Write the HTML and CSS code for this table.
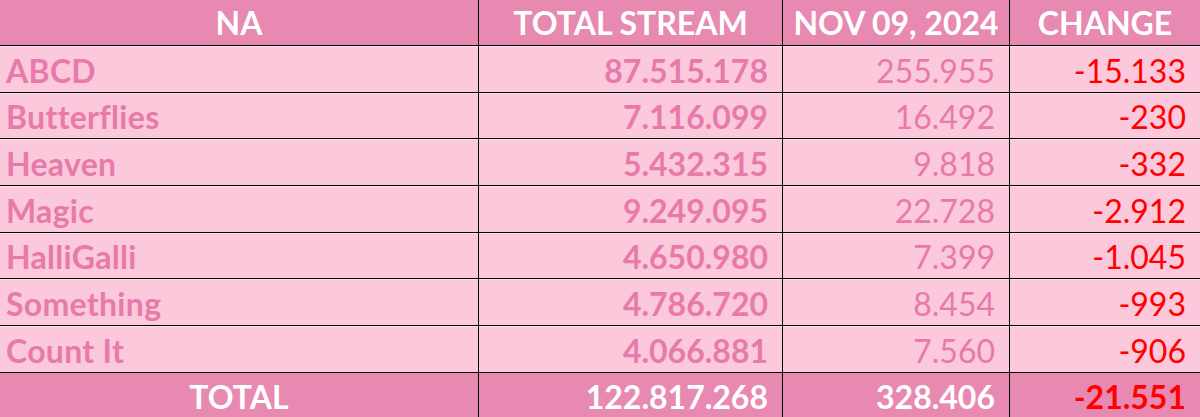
FILE: index.html
```html
<!DOCTYPE html>
<html>
<head>
<meta charset="utf-8">
<link rel="stylesheet" href="styles.css">
</head>
<body>
<div class="sheet">
  <div class="cell head c1 center">NA</div>
  <div class="cell head center">TOTAL STREAM</div>
  <div class="cell head center">NOV 09, 2024</div>
  <div class="cell head center">CHANGE</div>

  <div class="cell body c1 name">ABCD</div>
  <div class="cell body num bold">87.515.178</div>
  <div class="cell body num">255.955</div>
  <div class="cell body num red">-15.133</div>

  <div class="cell body c1 name">Butterflies</div>
  <div class="cell body num bold">7.116.099</div>
  <div class="cell body num">16.492</div>
  <div class="cell body num red">-230</div>

  <div class="cell body c1 name">Heaven</div>
  <div class="cell body num bold">5.432.315</div>
  <div class="cell body num">9.818</div>
  <div class="cell body num red">-332</div>

  <div class="cell body c1 name">Magic</div>
  <div class="cell body num bold">9.249.095</div>
  <div class="cell body num">22.728</div>
  <div class="cell body num red">-2.912</div>

  <div class="cell body c1 name">HalliGalli</div>
  <div class="cell body num bold">4.650.980</div>
  <div class="cell body num">7.399</div>
  <div class="cell body num red">-1.045</div>

  <div class="cell body c1 name">Something</div>
  <div class="cell body num bold">4.786.720</div>
  <div class="cell body num">8.454</div>
  <div class="cell body num red">-993</div>

  <div class="cell body c1 name">Count It</div>
  <div class="cell body num bold">4.066.881</div>
  <div class="cell body num">7.560</div>
  <div class="cell body num red">-906</div>

  <div class="cell foot c1 center">TOTAL</div>
  <div class="cell foot num">122.817.268</div>
  <div class="cell foot num">328.406</div>
  <div class="cell foot num red">-21.551</div>
</div>
</body>
</html>
```

FILE: styles.css
```css
html, body {
  margin: 0;
  padding: 0;
  background: #fbc8dc;
}
.sheet {
  width: 1200px;
  height: 417px;
  display: grid;
  grid-template-columns: 478px 304px 227px 191px;
  grid-template-rows: 45px 47px 46px 47px 47px 46px 47px 47px 45px;
  font-family: Lato, "Open Sans", sans-serif;
  font-size: 32px;
  overflow: hidden;
}
.cell {
  box-sizing: border-box;
  display: flex;
  align-items: center;
  white-space: nowrap;
  border-left: 1px solid #000;
  line-height: 1;
}
.c1 {
  border-left: none;
}
.head {
  background: #e889b1;
  color: #fff;
  font-weight: 700;
  padding-top: 1px;
}
.body {
  background: #fbc8dc;
  color: #e87aa9;
  border-top: 1px solid #000;
  box-shadow: inset 0 1px 0 #fde3ee;
  padding-top: 3px;
}
.foot {
  background: #e889b1;
  color: #fff;
  font-weight: 700;
  border-top: 1px solid #000;
  padding-top: 3px;
}
.center {
  justify-content: center;
}
.name {
  font-weight: 700;
  padding-left: 6px;
  letter-spacing: 0.3px;
}
.num {
  justify-content: flex-end;
  padding-right: 14px;
}
.bold {
  font-weight: 700;
}
.red {
  color: #ff0000;
}
```
